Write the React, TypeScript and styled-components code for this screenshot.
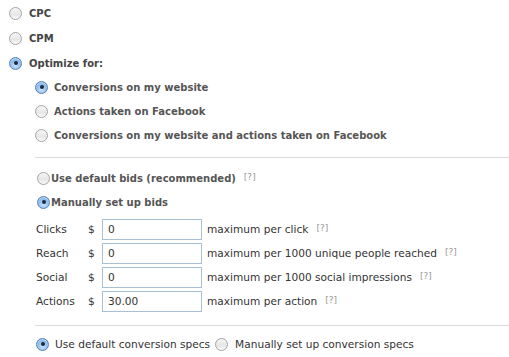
import React from "react";
import styled, { createGlobalStyle, css } from "styled-components";

const Global = createGlobalStyle`
  html, body { margin: 0; padding: 0; background: #fff; }
  body { font-family: "DejaVu Sans", "Liberation Sans", sans-serif; font-size: 10.6px; color: #333; }
`;

const Page = styled.div`
  display: flex;
  flex-direction: column;
  padding: 1px 0 0 9px;
  width: 500px;
`;

const Row = styled.label<{ $h?: number; $gap?: number; $indent?: number }>`
  display: flex;
  align-items: center;
  height: ${(p) => p.$h ?? 24}px;
  gap: ${(p) => p.$gap ?? 6}px;
  margin-left: ${(p) => p.$indent ?? 0}px;
`;

const Radio = styled.span<{ $on?: boolean }>`
  box-sizing: border-box;
  width: 13px;
  height: 13px;
  border-radius: 50%;
  flex: none;
  display: flex;
  align-items: center;
  justify-content: center;
  ${(p) =>
    p.$on
      ? css`
          border: 1px solid #5a7fae;
          background: radial-gradient(circle at 50% 70%, #c6e2fb 0%, #8cbdf0 55%, #5f9fe0 100%);
          box-shadow: inset 0 1px 1px rgba(255, 255, 255, 0.6);
          &::after {
            content: "";
            width: 4px;
            height: 4px;
            border-radius: 50%;
            background: #1b2a3a;
          }
        `
      : css`
          border: 1px solid #a4a4a4;
          background: linear-gradient(#f6f6f6, #e6e6e6 60%, #fbfbfb);
        `}
`;

const Label = styled.span<{ $bold?: boolean; $tone?: string }>`
  font-weight: ${(p) => (p.$bold ? 700 : 400)};
  font-size: ${(p) => (p.$bold ? "10px" : "inherit")};
  color: ${(p) => p.$tone ?? "#333"};
  white-space: nowrap;
`;

const Help = styled.span`
  font-size: 9px;
  color: #999;
  margin-left: 8px;
  position: relative;
  top: -2px;
  font-weight: 400;
`;

const Sub = styled.div`
  display: flex;
  flex-direction: column;
  margin-left: 26px;
`;

const Divider = styled.div<{ $mt: number; $mb: number }>`
  height: 1px;
  background: #dadada;
  margin: ${(p) => p.$mt}px 0 ${(p) => p.$mb}px 0;
`;

const BidGrid = styled.div`
  display: grid;
  grid-template-columns: 52px 14px 100px auto;
  grid-auto-rows: 24px;
  align-items: center;
  padding-left: 1px;
  margin-top: 3px;
`;

const Cell = styled.span`
  color: #333;
  white-space: nowrap;
`;

const Input = styled.input`
  box-sizing: border-box;
  width: 100px;
  height: 21px;
  border: 1px solid #a9bfd6;
  padding: 0 5px;
  font: inherit;
  color: #333;
  outline: none;
  margin: 0;
`;

const After = styled.span`
  padding-left: 5px;
  color: #333;
  white-space: nowrap;
`;

const BottomRow = styled.div`
  display: flex;
  align-items: center;
  height: 24px;
  margin-left: 1px;
`;

const bids = [
  { k: "Clicks", v: "0", t: "maximum per click" },
  { k: "Reach", v: "0", t: "maximum per 1000 unique people reached" },
  { k: "Social", v: "0", t: "maximum per 1000 social impressions" },
  { k: "Actions", v: "30.00", t: "maximum per action" },
];

export default function App() {
  return (
    <>
      <Global />
      <Page>
        <Row $h={25} $gap={7}>
          <Radio />
          <Label $bold $tone="#444">CPC</Label>
        </Row>
        <Row $h={25} $gap={7}>
          <Radio />
          <Label $bold $tone="#444">CPM</Label>
        </Row>
        <Row $h={24} $gap={7}>
          <Radio $on />
          <Label $bold $tone="#444">Optimize for:</Label>
        </Row>
        <Sub>
          <Row>
            <Radio $on />
            <Label $bold $tone="#555">Conversions on my website</Label>
          </Row>
          <Row>
            <Radio />
            <Label $bold $tone="#555">Actions taken on Facebook</Label>
          </Row>
          <Row>
            <Radio />
            <Label $bold $tone="#555">Conversions on my website and actions taken on Facebook</Label>
          </Row>
          <Divider $mt={10} $mb={8} />
          <Row $gap={1} $indent={2}>
            <Radio />
            <Label $bold $tone="#555">
              Use default bids (recommended)<Help>[?]</Help>
            </Label>
          </Row>
          <Row $gap={1} $indent={2}>
            <Radio $on />
            <Label $bold $tone="#555">Manually set up bids</Label>
          </Row>
          <BidGrid>
            {bids.map((b) => (
              <React.Fragment key={b.k}>
                <Cell>{b.k}</Cell>
                <Cell>$</Cell>
                <Input defaultValue={b.v} />
                <After>
                  {b.t}
                  <Help>[?]</Help>
                </After>
              </React.Fragment>
            ))}
          </BidGrid>
          <Divider $mt={12} $mb={6} />
          <BottomRow>
            <Row $gap={6}>
              <Radio $on />
              <Label>Use default conversion specs</Label>
            </Row>
            <Row $gap={7} $indent={5}>
              <Radio />
              <Label>Manually set up conversion specs</Label>
            </Row>
          </BottomRow>
        </Sub>
      </Page>
    </>
  );
}
